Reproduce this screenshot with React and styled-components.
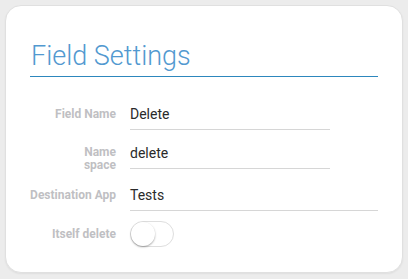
import React, { useState } from 'react';
import styled, { createGlobalStyle } from 'styled-components';

const GlobalStyle = createGlobalStyle`
  html, body {
    margin: 0;
    padding: 0;
    background: #ececec;
    font-family: Roboto, "Liberation Sans", sans-serif;
  }
`;

const Page = styled.div`
  padding: 5px;
  width: 408px;
  height: 279px;
  box-sizing: border-box;
`;

const Card = styled.div`
  width: 398px;
  height: 268px;
  box-sizing: border-box;
  background: #fff;
  border-radius: 16px;
  border: 1px solid #e0e0e0;
  box-shadow: 0 1px 2px rgba(0, 0, 0, 0.06);
  padding: 30px 24px 0 24px;
`;

const Title = styled.h2`
  margin: 0;
  font-family: Roboto, "Liberation Sans", sans-serif;
  font-weight: 300;
  font-size: 27px;
  line-height: 40px;
  color: #5299d0;
  border-bottom: 1px solid #2d87bd;
  padding-left: 1px;
`;

const Form = styled.div`
  display: grid;
  grid-template-columns: 86px 1fr;
  column-gap: 14px;
  row-gap: 7px;
  margin-top: 21px;
`;

const Label = styled.div`
  text-align: right;
  font-size: 12px;
  font-weight: 700;
  color: #bfbfc3;
  line-height: 13px;
  padding-top: ${p => p.$top}px;
`;

const Field = styled.div`
  width: ${p => p.$width}px;
  height: 32px;
  line-height: 32px;
  font-size: 14px;
  color: #2a2a2a;
  border-bottom: 1px solid #d6d6d6;
  box-sizing: border-box;
`;

const Track = styled.button`
  margin-top: 3px;
  width: 44px;
  height: 26px;
  padding: 0;
  border-radius: 13px;
  border: 1px solid #dedede;
  background: ${p => (p.$on ? '#2d87bd' : '#fff')};
  position: relative;
  cursor: pointer;
`;

const Knob = styled.span`
  position: absolute;
  top: 0;
  left: ${p => (p.$on ? '18px' : '0')};
  width: 24px;
  height: 24px;
  border-radius: 50%;
  background: #fff;
  box-shadow: 0 1px 2px rgba(0, 0, 0, 0.35);
  transition: left 0.15s;
`;

const App = () => {
  const [on, setOn] = useState(false);
  return (
    <Page>
      <GlobalStyle />
      <Card>
        <Title>Field Settings</Title>
        <Form>
          <Label $top={10}>Field Name</Label>
          <Field $width={200}>Delete</Field>

          <Label $top={9}>Name<br />space</Label>
          <Field $width={200}>delete</Field>

          <Label $top={10}>Destination App</Label>
          <Field $width={248}>Tests</Field>

          <Label $top={10}>Itself delete</Label>
          <div>
            <Track $on={on} onClick={() => setOn(!on)}>
              <Knob $on={on} />
            </Track>
          </div>
        </Form>
      </Card>
    </Page>
  );
};

export default App;
